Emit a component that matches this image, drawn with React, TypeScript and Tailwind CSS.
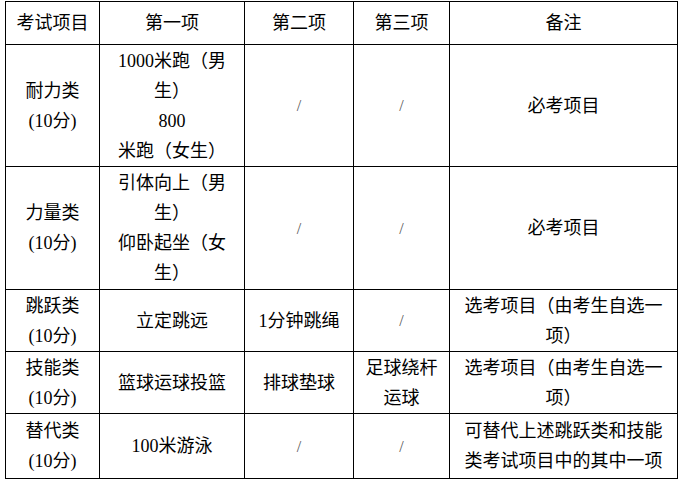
const FONT = '"Liberation Serif", "Noto Sans CJK SC", serif';

type Row = {
  h: string;
  cells: (string[] | null)[];
};

// null = "/" placeholder cell
const ROWS: Row[] = [
  {
    h: 'h-[122px]',
    cells: [
      ['耐力类', '(10分)'],
      ['1000米跑（男', '生）', '800', '米跑（女生）'],
      null,
      null,
      ['必考项目'],
    ],
  },
  {
    h: 'h-[123px]',
    cells: [
      ['力量类', '(10分)'],
      ['引体向上（男', '生）', '仰卧起坐（女', '生）'],
      null,
      null,
      ['必考项目'],
    ],
  },
  {
    h: 'h-[62px]',
    cells: [
      ['跳跃类', '(10分)'],
      ['立定跳远'],
      ['1分钟跳绳'],
      null,
      ['选考项目（由考生自选一', '项）'],
    ],
  },
  {
    h: 'h-[62px]',
    cells: [
      ['技能类', '(10分)'],
      ['篮球运球投篮'],
      ['排球垫球'],
      ['足球绕杆', '运球'],
      ['选考项目（由考生自选一', '项）'],
    ],
  },
  {
    h: 'h-[65px]',
    cells: [
      ['替代类', '(10分)'],
      ['100米游泳'],
      null,
      null,
      ['可替代上述跳跃类和技能', '类考试项目中的其中一项'],
    ],
  },
];

const HEADERS = ['考试项目', '第一项', '第二项', '第三项', '备注'];

function Cell({ lines }: { lines: string[] | null }) {
  return (
    <td className="border border-black px-[6px] py-0 text-center align-middle">
      {lines ? (
        lines.map((l, i) => (
          <div key={i} className="whitespace-nowrap">
            {l}
          </div>
        ))
      ) : (
        <span className="text-[16px] text-[#555]">/</span>
      )}
    </td>
  );
}

export default function App() {
  return (
    <div className="w-[680px] h-[486px] bg-white pt-[1px] pl-[5px]" style={{ fontFamily: FONT }}>
      <table className="table-fixed border-collapse w-[672px] text-[18px] leading-[30px] text-black">
        <colgroup>
          <col className="w-[94px]" />
          <col className="w-[145px]" />
          <col className="w-[109px]" />
          <col className="w-[96px]" />
          <col className="w-[228px]" />
        </colgroup>
        <thead>
          <tr className="h-[43px]">
            {HEADERS.map((h) => (
              <th key={h} className="border border-black font-normal text-center align-middle">
                {h}
              </th>
            ))}
          </tr>
        </thead>
        <tbody>
          {ROWS.map((row, i) => (
            <tr key={i} className={row.h}>
              {row.cells.map((c, j) => (
                <Cell key={j} lines={c} />
              ))}
            </tr>
          ))}
        </tbody>
      </table>
    </div>
  );
}
